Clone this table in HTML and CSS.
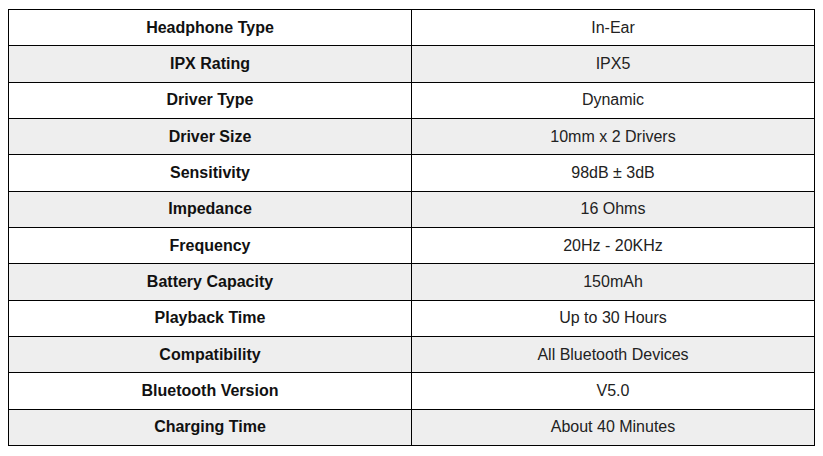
FILE: index.html
```html
<!DOCTYPE html>
<html>
<head>
<meta charset="utf-8">
<link rel="stylesheet" href="styles.css">
</head>
<body>
<table class="specs">
<tbody>
<tr><th>Headphone Type</th><td>In-Ear</td></tr>
<tr><th>IPX Rating</th><td>IPX5</td></tr>
<tr><th>Driver Type</th><td>Dynamic</td></tr>
<tr><th>Driver Size</th><td>10mm x 2 Drivers</td></tr>
<tr><th>Sensitivity</th><td>98dB ± 3dB</td></tr>
<tr><th>Impedance</th><td>16 Ohms</td></tr>
<tr><th>Frequency</th><td>20Hz - 20KHz</td></tr>
<tr><th>Battery Capacity</th><td>150mAh</td></tr>
<tr><th>Playback Time</th><td>Up to 30 Hours</td></tr>
<tr><th>Compatibility</th><td>All Bluetooth Devices</td></tr>
<tr><th>Bluetooth Version</th><td>V5.0</td></tr>
<tr><th>Charging Time</th><td>About 40 Minutes</td></tr>
</tbody>
</table>
</body>
</html>
```
FILE: styles.css
```css
html, body {
  background: #ffffff;
}
body {
  margin: 9px 8px 0 8px;
  font-family: "Liberation Sans", Arial, sans-serif;
  font-size: 16px;
  color: #222222;
}
.specs {
  width: 807px;
  border-collapse: collapse;
  table-layout: fixed;
}
.specs th,
.specs td {
  border: 1px solid #000000;
  text-align: center;
  vertical-align: middle;
  padding: 0 8px;
  height: 36.33px;
  box-sizing: border-box;
  width: 50%;
}
.specs th {
  font-weight: bold;
  color: #111111;
}
.specs tr:nth-child(even) th,
.specs tr:nth-child(even) td {
  background: #eeeeee;
}
```
